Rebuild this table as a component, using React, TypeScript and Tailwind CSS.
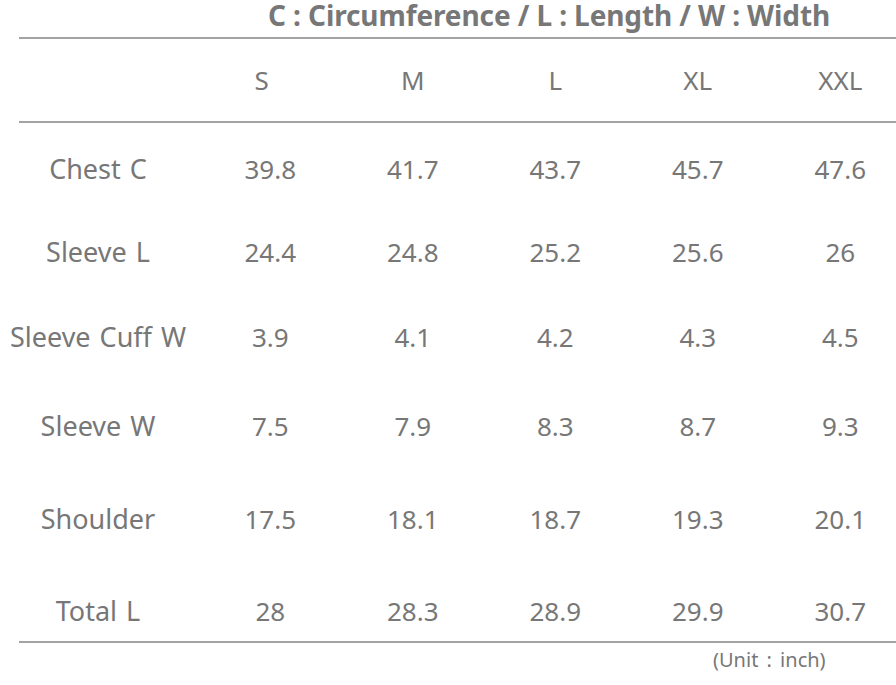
import React from 'react';

const sizes = ["S", "M", "L", "XL", "XXL"];

const rows: { label: string; values: string[]; height: string }[] = [
    { label: "Chest C", values: ["39.8", "41.7", "43.7", "45.7", "47.6"], height: "h-[83px]" },
    { label: "Sleeve L", values: ["24.4", "24.8", "25.2", "25.6", "26"], height: "h-[85px]" },
    { label: "Sleeve Cuff W", values: ["3.9", "4.1", "4.2", "4.3", "4.5"], height: "h-[89px]" },
    { label: "Sleeve W", values: ["7.5", "7.9", "8.3", "8.7", "9.3"], height: "h-[93px]" },
    { label: "Shoulder", values: ["17.5", "18.1", "18.7", "19.3", "20.1"], height: "h-[92px]" },
    { label: "Total L", values: ["28", "28.3", "28.9", "29.9", "30.7"], height: "h-[76px]" },
]

// grid for the label column plus the five size columns
const gridCols = "grid grid-cols-[199px_repeat(5,142.5px)]"

export default function App() {
    return (
        <div className="w-[896px] h-[685px] overflow-hidden bg-white text-[#777777] font-['Noto_Sans',sans-serif]">
            <div className="h-[37px] pl-[268px] text-[28px] leading-[30px] font-bold tracking-[-0.1px] whitespace-nowrap">
                C : Circumference / L : Length / W : Width
            </div>
            <div className="ml-[19px] h-[2px] bg-[#a3a3a3]" />

            <div className={`${gridCols} h-[82px] pt-[26px] text-[26px] leading-[30px]`}>
                <div />
                {sizes.map((s, i) => (
                    <div key={s} className={i === 0 ? "text-center pr-[17px]" : "text-center"}>
                        {s}
                    </div>
                ))}
            </div>
            <div className="ml-[19px] h-[2px] bg-[#a3a3a3]" />

            {rows.map((row) => (
                <div key={row.label} className={`${gridCols} ${row.height} pt-[31px] text-[26px] leading-[30px]`}>
                    <div className="text-center text-[27px] pr-[3px] whitespace-nowrap [word-spacing:2px]">{row.label}</div>
                    {row.values.map((v, i) => (
                        <div key={i} className="text-center">{v}</div>
                    ))}
                </div>
            ))}
            <div className="ml-[19px] h-[2px] bg-[#a3a3a3]" />

            <div className="pl-[713px] pt-[5px] text-[20px] leading-[24px] whitespace-nowrap [word-spacing:3px]">
                (Unit : inch)
            </div>
        </div>
    )
}
